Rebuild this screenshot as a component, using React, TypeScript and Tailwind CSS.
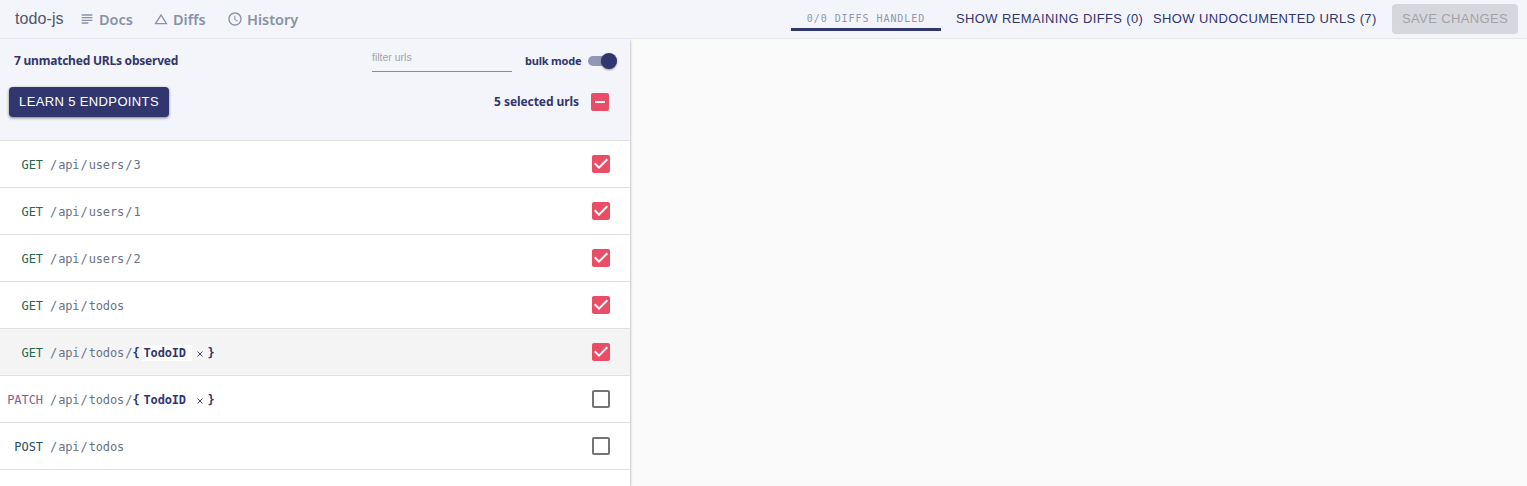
import { useState } from "react";

type Row = { method: string; segments: string[]; param?: string; checked: boolean; active?: boolean };

const rows: Row[] = [
  { method: "GET", segments: ["api", "users", "3"], checked: true },
  { method: "GET", segments: ["api", "users", "1"], checked: true },
  { method: "GET", segments: ["api", "users", "2"], checked: true },
  { method: "GET", segments: ["api", "todos"], checked: true },
  { method: "GET", segments: ["api", "todos"], param: "TodoID", checked: true, active: true },
  { method: "PATCH", segments: ["api", "todos"], param: "TodoID", checked: false },
  { method: "POST", segments: ["api", "todos"], checked: false },
];

const methodColors: Record<string, string> = {
  GET: "text-[#276749]",
  PATCH: "text-[#83648b]",
  POST: "text-[#2a4e5e]",
};

const paths = {
  docs: "M14 17H4v2h10v-2zm6-8H4v2h16V9zM4 15h16v-2H4v2zM4 5v2h16V5H4z",
  diffs: "M12 7.77L18.39 18H5.61L12 7.77M12 4L2 20h20L12 4z",
  history:
    "M11.99 2C6.47 2 2 6.48 2 12s4.47 10 9.99 10C17.52 22 22 17.52 22 12S17.52 2 11.99 2zM12 20c-4.42 0-8-3.58-8-8s3.58-8 8-8 8 3.58 8 8-3.58 8-8 8zM12.5 7H11v6l4.6 2.9.75-1.23-3.85-2.42z",
  checked:
    "M19 3H5c-1.11 0-2 .9-2 2v14c0 1.1.89 2 2 2h14c1.11 0 2-.9 2-2V5c0-1.1-.89-2-2-2zm-9 14l-5-5 1.41-1.41L10 14.17l7.59-7.59L19 8l-9 9z",
  unchecked:
    "M19 5v14H5V5h14m0-2H5c-1.1 0-2 .9-2 2v14c0 1.1.9 2 2 2h14c1.1 0 2-.9 2-2V5c0-1.1-.9-2-2-2z",
  mixed:
    "M19 3H5c-1.1 0-2 .9-2 2v14c0 1.1.9 2 2 2h14c1.1 0 2-.9 2-2V5c0-1.1-.9-2-2-2zm-2 10H7v-2h10v2z",
};

function Icon({ name, className }: { name: keyof typeof paths; className: string }) {
  return (
    <svg viewBox="0 0 24 24" fill="currentColor" className={`shrink-0 ${className}`}>
      <path d={paths[name]} />
    </svg>
  );
}

function NavItem({ icon, label, className }: { icon: "docs" | "diffs" | "history"; label: string; className: string }) {
  return (
    <a className={`flex shrink-0 items-center text-[#8792a9] ${className}`}>
      <Icon name={icon} className="size-4" />
      <span className="ml-1 font-['Noto_Sans',sans-serif] text-[14.5px] leading-5 font-semibold">{label}</span>
    </a>
  );
}

function UrlRow({ row, onToggle }: { row: Row; onToggle: () => void }) {
  return (
    <li
      className={`flex h-[47px] items-center border-b border-[#e0e0e0] pr-[17px] font-['DejaVu_Sans_Mono',monospace] text-[12px] ${row.active ? "bg-[#f4f4f4]" : "bg-white"}`}
    >
      <span className={`w-[43px] shrink-0 pt-[2px] text-right tracking-[-0.05px] ${methodColors[row.method]}`}>{row.method}</span>
      <div className="ml-[7px] flex items-center pt-[2px] tracking-[-0.1px] text-[#697386]">
        {row.segments.map((s, i) => (
          <span key={i} className="flex">
            <span>/</span>
            <span className="mx-px">{s}</span>
          </span>
        ))}
        {row.param && (
          <>
            <span>/</span>
            <span className="flex items-center font-bold text-[#31366f]">
              <span>{"{"}</span>
              <span className="ml-[2px] h-4 w-[50px] bg-white pl-[2px] leading-4 tracking-[-0.15px]">{row.param}</span>
              <svg viewBox="0 0 6 6" className="mt-[2px] ml-[5px] size-[6px]" stroke="currentColor" strokeWidth="0.9">
                <path d="M.5.5l5 5M5.5.5l-5 5" />
              </svg>
              <span className="ml-[5px]">{"}"}</span>
            </span>
          </>
        )}
      </div>
      <button onClick={onToggle} aria-label="select url" className="ml-auto">
        <Icon name={row.checked ? "checked" : "unchecked"} className={`size-6 ${row.checked ? "text-[#ea4d66]" : "text-[#757575]"}`} />
      </button>
    </li>
  );
}

export default function App() {
  const [items, setItems] = useState(rows);
  const toggle = (i: number) => setItems(items.map((r, j) => (j === i ? { ...r, checked: !r.checked } : r)));
  return (
    <div className="flex h-[486px] w-[1527px] flex-col overflow-hidden bg-[#fafafa] font-['Liberation_Sans',sans-serif]">
      <header className="flex h-[39px] shrink-0 items-center border-b border-[#e6e7e9] bg-[#f4f5fa] pr-[9px] pl-[15px]">
        <span className="w-[49px] shrink-0 text-[16px] leading-5 tracking-[0.1px] whitespace-nowrap text-[#4f566b]">todo-js</span>
        <NavItem icon="docs" label="Docs" className="ml-[15px] w-[74px]" />
        <NavItem icon="diffs" label="Diffs" className="w-[74px]" />
        <NavItem icon="history" label="History" className="" />
        <div className="ml-auto flex items-center text-[13px] whitespace-nowrap text-[#31366f]">
          <div className="mr-[15px] flex h-[24px] w-[150px] flex-col items-center border-b-3 border-[#31366f] pt-[4px] font-['DejaVu_Sans_Mono',monospace] text-[10px] leading-4 tracking-[0.95px] text-[#8f96ab]">
            0/0 DIFFS HANDLED
          </div>
          <button className="w-[187px] text-left tracking-[0.37px]">SHOW REMAINING DIFFS (0)</button>
          <button className="ml-[10px] w-[224px] text-left tracking-[0.38px]">SHOW UNDOCUMENTED URLS (7)</button>
          <button className="ml-[15px] h-[30px] w-[126px] rounded-[4px] bg-[#d6d7dc] tracking-[0.37px] text-[#a2a3a8]">
            SAVE CHANGES
          </button>
        </div>
      </header>
      <main className="flex min-h-0 flex-1 overflow-hidden">
        <aside className="w-[630px] shrink-0 bg-white shadow-[0_1px_3px_rgba(0,0,0,0.35)]">
          <div className="h-[102px] border-b border-[#e0e0e0] bg-[#f4f5fa] font-['Noto_Sans',sans-serif] font-bold text-[#31366f]">
            <div className="flex h-[44px] items-center pr-[13px] pl-[14px]">
              <span className="text-[12px] tracking-[-0.22px]">7 unmatched URLs observed</span>
              <input
                placeholder="filter urls"
                className="mt-[-4px] ml-auto h-[25px] w-[140px] border-b border-[#8b8c90] pb-[3px] font-['Liberation_Sans',sans-serif] text-[10.5px] font-normal outline-none placeholder:text-[#a2a3a6]"
              />
              <span className="ml-[13px] w-[56px] text-[11px] tracking-[-0.2px] whitespace-nowrap">bulk mode</span>
              <span className="ml-[7px] flex h-[10px] w-[29px] items-center justify-end rounded-full bg-[#9396b8]">
                <span className="size-4 rounded-full bg-[#31366f] shadow-[0_1px_2px_rgba(0,0,0,0.4)]" />
              </span>
            </div>
            <div className="flex h-[38px] items-center pr-[18px] pl-[9px]">
              <button className="h-[30px] w-[160px] rounded-[4px] bg-[#31366f] font-['Liberation_Sans',sans-serif] text-[13px] font-normal tracking-[0.37px] text-white shadow-[0_1px_3px_rgba(0,0,0,0.5)]">
                LEARN 5 ENDPOINTS
              </button>
              <span className="ml-auto text-[12px] tracking-[-0.07px]">5 selected urls</span>
              <Icon name="mixed" className="ml-[9px] size-6 text-[#ea4d66]" />
            </div>
          </div>
          <ul>
            {items.map((r, i) => (
              <UrlRow key={i} row={r} onToggle={() => toggle(i)} />
            ))}
          </ul>
        </aside>
      </main>
    </div>
  );
}
